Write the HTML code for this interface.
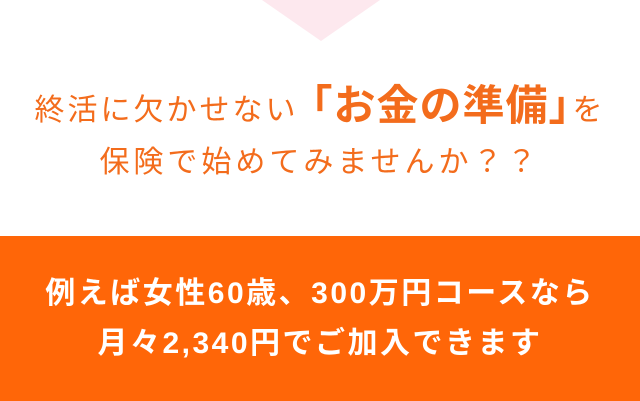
<!DOCTYPE html>
<html><head><meta charset="utf-8"><style>
html,body{margin:0;padding:0}
body{width:640px;height:401px;position:relative;overflow:hidden;background:#fff;font-family:"Liberation Sans","Noto Sans CJK JP",sans-serif}
.tri{position:absolute;left:262px;top:0;width:0;height:0;border-left:59px solid transparent;border-right:59px solid transparent;border-top:41px solid #fde8ee}
.l{position:absolute;left:0;width:640px;text-align:center;white-space:nowrap}
.t1{top:80px;color:#f36c1c;font-size:30px;letter-spacing:3px;line-height:52px}
.t1 b{font-size:42px;letter-spacing:1px;font-weight:bold}
.t2{top:143px;color:#f36c1c;font-size:30px;letter-spacing:4px;line-height:40px}
.band{position:absolute;left:0;top:236px;width:640px;height:165px;background:#ff6608}
.w{color:#fff;font-weight:bold;font-size:30px;letter-spacing:2.5px;line-height:40px}
</style></head><body>
<div class="tri"></div>
<div class="l t1">終活に欠かせない<b style="margin-left:-8px">「お金の準備<span style="margin-right:-19px">」</span></b>を</div>
<div class="l t2">保険で始めてみませんか？？</div>
<div class="band"></div>
<div class="l w" style="top:274px">例えば女性60歳、300万円コースなら</div>
<div class="l w" style="top:324px">月々2,340円でご加入できます</div>
</body></html>
